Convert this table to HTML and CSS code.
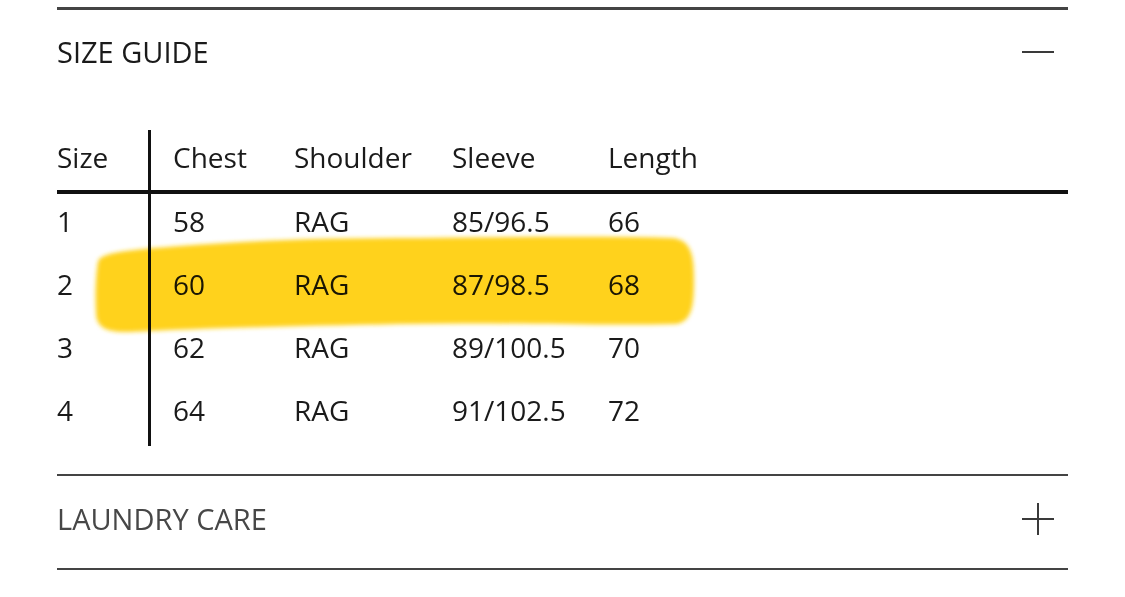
FILE: index.html
```html
<!DOCTYPE html>
<html lang="en">
<head>
<meta charset="utf-8">
<title>Size Guide</title>
<link rel="stylesheet" href="styles.css">
</head>
<body>
<div class="page">
  <section class="panel panel-open">
    <div class="panel-head">
      <h2 class="panel-title">SIZE GUIDE</h2>
      <span class="toggle" aria-hidden="true"><span class="bar-h"></span></span>
    </div>
    <div class="size-table">
      <div class="trow thead">
        <div class="cell c-size">Size</div>
        <div class="cell c-chest">Chest</div>
        <div class="cell">Shoulder</div>
        <div class="cell">Sleeve</div>
        <div class="cell">Length</div>
      </div>
      <div class="trow">
        <div class="cell c-size">1</div>
        <div class="cell c-chest">58</div>
        <div class="cell">RAG</div>
        <div class="cell">85/96.5</div>
        <div class="cell">66</div>
      </div>
      <div class="trow">
        <div class="cell c-size">2</div>
        <div class="cell c-chest">60</div>
        <div class="cell">RAG</div>
        <div class="cell">87/98.5</div>
        <div class="cell">68</div>
      </div>
      <div class="trow">
        <div class="cell c-size">3</div>
        <div class="cell c-chest">62</div>
        <div class="cell">RAG</div>
        <div class="cell">89/100.5</div>
        <div class="cell">70</div>
      </div>
      <div class="trow">
        <div class="cell c-size">4</div>
        <div class="cell c-chest">64</div>
        <div class="cell">RAG</div>
        <div class="cell">91/102.5</div>
        <div class="cell">72</div>
      </div>
    </div>
  </section>
  <section class="panel panel-closed">
    <div class="panel-head">
      <h2 class="panel-title muted">LAUNDRY CARE</h2>
      <span class="toggle" aria-hidden="true"><span class="bar-h"></span><span class="bar-v"></span></span>
    </div>
  </section>
  <svg class="marker" width="1125" height="597" viewBox="0 0 1125 597" aria-hidden="true">
    <defs>
      <filter id="soft" x="-5%" y="-20%" width="110%" height="140%">
        <feGaussianBlur stdDeviation="2.2"/>
      </filter>
    </defs>
    <path filter="url(#soft)" fill="#ffd21a" d="M98 262 C 100 252, 130 250, 180 246 C 260 240, 330 238, 420 238 C 520 237, 600 236, 672 238 C 690 240, 694 252, 694 280 C 694 305, 692 322, 676 324 C 600 326, 500 322, 400 324 C 300 326, 200 328, 130 332 C 104 333, 96 326, 96 312 C 95 295, 96 272, 98 262 Z"/>
  </svg>
</div>
</body>
</html>
```

FILE: styles.css
```css
* { box-sizing: border-box; }

html, body {
  margin: 0;
  padding: 0;
  background: #ffffff;
}

body {
  font-family: "Open Sans", "Noto Sans", sans-serif;
  color: #1a1a1a;
}

.page {
  position: relative;
  width: 1125px;
  height: 597px;
  padding: 7px 57px 0;
}

.panel {
  border-top: 3px solid #444444;
}

.panel-head {
  display: flex;
  align-items: center;
  justify-content: space-between;
}

.panel-open .panel-head {
  padding-top: 22px;
}

.panel-closed {
  border-top-width: 2px;
  border-bottom: 2px solid #444444;
  margin-top: 28px;
}

.panel-closed .panel-head {
  padding: 23px 0 29px;
}

.panel-title {
  margin: 0;
  font-size: 29px;
  line-height: 40px;
  font-weight: 400;
  color: #1a1a1a;
}

.panel-title.muted {
  color: #474747;
}

.toggle {
  position: relative;
  width: 32px;
  height: 32px;
  margin-right: 14px;
}

.bar-h {
  position: absolute;
  left: 0;
  top: 15px;
  width: 32px;
  height: 2px;
  background: #3a3a3a;
}

.bar-v {
  position: absolute;
  left: 15px;
  top: 0;
  width: 2px;
  height: 32px;
  background: #3a3a3a;
}

.size-table {
  margin-top: 58px;
  font-size: 28px;
  line-height: 40px;
}

.trow {
  display: grid;
  grid-template-columns: 94px 143px 158px 156px 1fr;
  height: 63px;
  padding-top: 7px;
}

.trow.thead {
  height: 64px;
  border-bottom: 4px solid #111111;
}

.cell {
  white-space: nowrap;
}

.c-size {
  border-right: 3px solid #111111;
  margin-top: -7px;
  padding-top: 7px;
  height: 63px;
}

.thead .c-size {
  height: 64px;
}

.c-chest {
  padding-left: 22px;
}

.marker {
  position: absolute;
  left: 0;
  top: 0;
  pointer-events: none;
  mix-blend-mode: multiply;
}
```
